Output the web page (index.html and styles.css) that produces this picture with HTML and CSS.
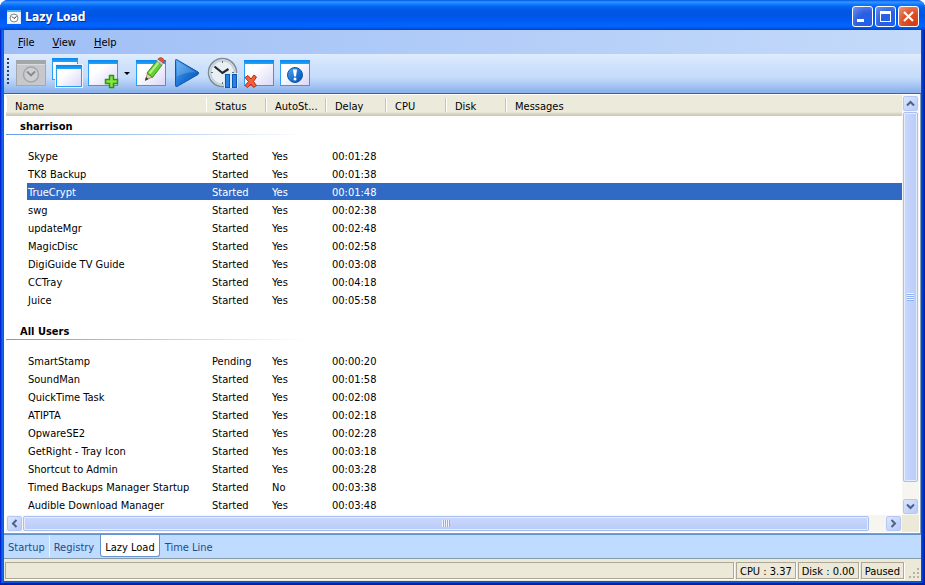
FILE: index.html
```html
<!DOCTYPE html>
<html lang="en">
<head>
    <meta charset="UTF-8">
    <meta name="viewport" content="width=device-width, initial-scale=1.0">
    <title>Lazy Load</title>
    <link rel="stylesheet" href="styles.css">
</head>
<body>
<div class="window">
    <header class="titlebar">
        <svg class="app-icon" width="14" height="14" viewBox="0 0 14 14">
            <rect x="0.5" y="0.5" width="13" height="13" fill="#f4f6f8" stroke="#e4eefa"/>
            <rect x="0" y="0" width="14" height="2" fill="#3fb2f2"/>
            <circle cx="7" cy="8" r="4" fill="#fff" stroke="#7c8791"/>
            <path d="M5 6.500l2 2 2.500-2" fill="none" stroke="#333"/>
        </svg>
        <h1>Lazy Load</h1>
        <div class="caption-buttons">
            <button type="button" aria-label="Minimize"><svg width="19" height="19"><rect x="4" y="12" width="7" height="3" fill="#fff"/></svg></button>
            <button type="button" aria-label="Maximize"><svg width="19" height="19"><path d="M4 4h11v11h-11z M5 7v7h9v-7z" fill="#fff" fill-rule="evenodd"/></svg></button>
            <button type="button" class="close" aria-label="Close"><svg width="19" height="19"><path d="M5 5l9 9M14 5l-9 9" stroke="#fff" stroke-width="2.200"/></svg></button>
        </div>
    </header>

    <nav class="menubar">
        <button type="button"><u>F</u>ile</button>
        <button type="button"><u>V</u>iew</button>
        <button type="button"><u>H</u>elp</button>
    </nav>

    <div class="toolbar">
        <span class="grip"></span>
        <button type="button" aria-label="Lazy load" disabled>
            <svg width="32" height="32" viewBox="0 0 32 32">
                <rect x="1.500" y="3.500" width="29" height="25" fill="#c6c8cb" stroke="#a5a8ab"/>
                <rect x="2" y="4" width="28" height="3" fill="#a4a7aa"/>
                <path d="M2 7.500h28" stroke="#d9dbdd"/>
                <circle cx="16" cy="17.500" r="7.500" fill="#cdcfd1" stroke="#a4a6aa" stroke-width="1.500"/>
                <path d="M12 14.500l4 4 4-4" fill="none" stroke="#85888d" stroke-width="1.800"/>
            </svg>
        </button>
        <button type="button" aria-label="Show windows">
            <svg width="32" height="32" viewBox="0 0 32 32">
                <defs>
                    <linearGradient id="pane" x1="0" y1="0" x2="1" y2="1">
                        <stop offset="0.350" stop-color="#fff"/><stop offset="1" stop-color="#d9d6f6"/>
                    </linearGradient>
                    <linearGradient id="bar" x1="0" y1="0" x2="0" y2="1">
                        <stop offset="0" stop-color="#0a86ee"/><stop offset="1" stop-color="#1fa5fb"/>
                    </linearGradient>
                    <linearGradient id="blue" x1="0" y1="0" x2="1" y2="1">
                        <stop offset="0" stop-color="#5aa9f0"/><stop offset="0.550" stop-color="#1a72d2"/><stop offset="1" stop-color="#0a4faa"/>
                    </linearGradient>
                </defs>
                <rect x="1.500" y="1.500" width="25" height="21" fill="url(#pane)" stroke="#2a9df4"/>
                <rect x="1" y="1" width="26" height="4" fill="url(#bar)"/>
                <rect x="4" y="7" width="28" height="24" fill="#e9f4ff"/>
                <rect x="5.500" y="8.500" width="25" height="21" fill="url(#pane)" stroke="#2a9df4"/>
                <rect x="5" y="8" width="26" height="4" fill="url(#bar)"/>
            </svg>
        </button>
        <button type="button" aria-label="Add">
            <svg width="32" height="32" viewBox="0 0 32 32">
                <rect x="1.500" y="3.500" width="29" height="25" fill="url(#pane)" stroke="#2a9df4"/>
                <rect x="1" y="3" width="30" height="4" fill="url(#bar)"/>
                <path d="M22.500 18.500h4v4h4v4h-4v4h-4v-4h-4v-4h4z" fill="#8be33e" stroke="#209a18" stroke-width="1.500"/>
            </svg>
        </button>
        <button type="button" class="drop" aria-label="More add options">
            <svg width="12" height="32" viewBox="0 0 12 32"><path d="M5 15h6l-3 3z" fill="#000"/></svg>
        </button>
        <button type="button" aria-label="Edit">
            <svg width="32" height="32" viewBox="0 0 32 32">
                <rect x="1.500" y="3.500" width="29" height="25" fill="url(#pane)" stroke="#2a9df4"/>
                <rect x="1" y="3" width="30" height="4" fill="url(#bar)"/>
                <path d="M10.500 23l2-7 5 4z" fill="#f0cf9a" stroke="#826a42" stroke-width="0.700"/>
                <path d="M10 24l1-4 2.500 2z" fill="#333"/>
                <path d="M12 16l9.500-12 5.500 4-9.500 12.500z" fill="#65cf35" stroke="#37921f"/>
                <path d="M14.500 16.500l9-11" stroke="#b3f282" stroke-width="2"/>
                <path d="M21.500 4l1.500-2 5.500 4-1.500 2z" fill="#c8d0d8" stroke="#8c98a5" stroke-width="0.600"/>
                <path d="M23 2q2.500-2.500 5-0.500 2.500 2 0.500 4.500z" fill="#e4573b" stroke="#b93720" stroke-width="0.700"/>
            </svg>
        </button>
        <button type="button" aria-label="Run">
            <svg width="32" height="32" viewBox="0 0 32 32">
                <path d="M5.500 2.500q-1-0.500-1 1v25q0 1.500 1.500 1l21-12q1.500-1.500 0-2.500z" fill="url(#blue)" stroke="#0d58b4"/>
                <path d="M6 4l19 11.500q-9-1-19 4z" fill="#fff" opacity="0.180"/>
            </svg>
        </button>
        <button type="button" aria-label="Pause timer">
            <svg width="32" height="32" viewBox="0 0 32 32">
                <circle cx="15.500" cy="15.500" r="14" fill="#e9f0f4" stroke="#7e8b94" stroke-width="1.500"/>
                <circle cx="15.500" cy="15.500" r="12" fill="none" stroke="#c5d2da" stroke-width="2"/>
                <path d="M15.500 4v2M4 15.500h2M15.500 25v2M25 15.500h2" stroke="#6b767e"/>
                <path d="M7.500 9.500l8 6.500 6-4" fill="none" stroke="#222a30" stroke-width="2.200"/>
                <rect x="17" y="16" width="14" height="15" fill="#d5e7fa"/>
                <rect x="18.500" y="17.500" width="4" height="13" fill="#2a82dc" stroke="#0b58b5"/>
                <rect x="25.500" y="17.500" width="4" height="13" fill="#2a82dc" stroke="#0b58b5"/>
            </svg>
        </button>
        <button type="button" aria-label="Remove">
            <svg width="32" height="32" viewBox="0 0 32 32">
                <rect x="1.500" y="3.500" width="29" height="25" fill="url(#pane)" stroke="#2a9df4"/>
                <rect x="1" y="3" width="30" height="4" fill="url(#bar)"/>
                <path d="M2 20.500l3-2 3 3.500 3-4 2.500 2-3 4.500 3 4-3 2-2.500-3.500-3.500 3.500-2.500-2 3.500-4z" fill="#f0603c" stroke="#bb2a12"/>
            </svg>
        </button>
        <button type="button" aria-label="About">
            <svg width="32" height="32" viewBox="0 0 32 32">
                <rect x="1.500" y="3.500" width="29" height="25" fill="url(#pane)" stroke="#2a9df4"/>
                <rect x="1" y="3" width="30" height="4" fill="url(#bar)"/>
                <circle cx="16" cy="18" r="7.500" fill="url(#blue)" stroke="#0c57b0"/>
                <path d="M14 12.500h4l-1 7h-2z" fill="#fff"/>
                <circle cx="16" cy="22" r="1.500" fill="#fff"/>
            </svg>
        </button>
    </div>

    <main class="list-view">
        <div class="list-pane">
            <table>
                <colgroup>
                    <col class="col-name"><col class="col"><col class="col"><col class="col"><col class="col"><col class="col"><col>
                </colgroup>
                <thead>
                    <tr><th>Name</th><th>Status</th><th>AutoSt...</th><th>Delay</th><th>CPU</th><th>Disk</th><th>Messages</th></tr>
                </thead>
                <tbody>
                    <tr class="group"><th colspan="7"><span>sharrison</span></th></tr>
                    <tr><td>Skype</td><td>Started</td><td>Yes</td><td>00:01:28</td><td></td><td></td><td></td></tr>
                    <tr><td>TK8 Backup</td><td>Started</td><td>Yes</td><td>00:01:38</td><td></td><td></td><td></td></tr>
                    <tr class="selected"><td>TrueCrypt</td><td>Started</td><td>Yes</td><td>00:01:48</td><td></td><td></td><td></td></tr>
                    <tr><td>swg</td><td>Started</td><td>Yes</td><td>00:02:38</td><td></td><td></td><td></td></tr>
                    <tr><td>updateMgr</td><td>Started</td><td>Yes</td><td>00:02:48</td><td></td><td></td><td></td></tr>
                    <tr><td>MagicDisc</td><td>Started</td><td>Yes</td><td>00:02:58</td><td></td><td></td><td></td></tr>
                    <tr><td>DigiGuide TV Guide</td><td>Started</td><td>Yes</td><td>00:03:08</td><td></td><td></td><td></td></tr>
                    <tr><td>CCTray</td><td>Started</td><td>Yes</td><td>00:04:18</td><td></td><td></td><td></td></tr>
                    <tr><td>Juice</td><td>Started</td><td>Yes</td><td>00:05:58</td><td></td><td></td><td></td></tr>
                </tbody>
                <tbody class="next">
                    <tr class="group"><th colspan="7"><span>All Users</span></th></tr>
                    <tr><td>SmartStamp</td><td>Pending</td><td>Yes</td><td>00:00:20</td><td></td><td></td><td></td></tr>
                    <tr><td>SoundMan</td><td>Started</td><td>Yes</td><td>00:01:58</td><td></td><td></td><td></td></tr>
                    <tr><td>QuickTime Task</td><td>Started</td><td>Yes</td><td>00:02:08</td><td></td><td></td><td></td></tr>
                    <tr><td>ATIPTA</td><td>Started</td><td>Yes</td><td>00:02:18</td><td></td><td></td><td></td></tr>
                    <tr><td>OpwareSE2</td><td>Started</td><td>Yes</td><td>00:02:28</td><td></td><td></td><td></td></tr>
                    <tr><td>GetRight - Tray Icon</td><td>Started</td><td>Yes</td><td>00:03:18</td><td></td><td></td><td></td></tr>
                    <tr><td>Shortcut to Admin</td><td>Started</td><td>Yes</td><td>00:03:28</td><td></td><td></td><td></td></tr>
                    <tr><td>Timed Backups Manager Startup</td><td>Started</td><td>No</td><td>00:03:38</td><td></td><td></td><td></td></tr>
                    <tr><td>Audible Download Manager</td><td>Started</td><td>Yes</td><td>00:03:48</td><td></td><td></td><td></td></tr>
                </tbody>
            </table>
        </div>
        <div class="scroll vertical">
            <button type="button" aria-label="Scroll up"><svg width="9" height="9"><path d="M1 6.500l3.500-3.500 3.500 3.500" fill="none" stroke="#4d6185" stroke-width="2"/></svg></button>
            <span class="thumb"><i></i></span>
            <button type="button" aria-label="Scroll down"><svg width="9" height="9"><path d="M1 2.500l3.500 3.500 3.500-3.500" fill="none" stroke="#4d6185" stroke-width="2"/></svg></button>
        </div>
        <div class="scroll horizontal">
            <button type="button" aria-label="Scroll left"><svg width="9" height="9"><path d="M6.500 1l-3.500 3.500 3.500 3.500" fill="none" stroke="#4d6185" stroke-width="2"/></svg></button>
            <span class="thumb"><i></i></span>
            <button type="button" aria-label="Scroll right"><svg width="9" height="9"><path d="M2.500 1l3.500 3.500-3.500 3.500" fill="none" stroke="#4d6185" stroke-width="2"/></svg></button>
        </div>
        <div class="corner"></div>
    </main>

    <nav class="tabs">
        <a href="#startup">Startup</a>
        <a href="#registry">Registry</a>
        <a href="#lazyload" class="active">Lazy Load</a>
        <a href="#timeline">Time Line</a>
    </nav>

    <footer class="statusbar">
        <span class="message"></span>
        <span>CPU : 3.37</span>
        <span>Disk : 0.00</span>
        <span>Paused</span>
        <svg class="size-grip" width="12" height="12" viewBox="0 0 12 12">
            <path d="M9 1h2v2h-2zM5 5h2v2h-2zM9 5h2v2h-2zM1 9h2v2h-2zM5 9h2v2h-2zM9 9h2v2h-2z" fill="#b8b4a3"/>
        </svg>
    </footer>
</div>
</body>
</html>
```
FILE: styles.css
```css
* {
    box-sizing: border-box;
}
body {
    margin: 0;
    background: #fff;
    color: #000;
    font-family: "DejaVu Sans Condensed", "DejaVu Sans", Tahoma, sans-serif;
    font-size: 11px;
    line-height: 14px;
}
button {
    margin: 0;
    padding: 0;
    border: none;
    background: none;
    color: inherit;
    font: inherit;
}
svg {
    display: block;
}
.window {
    display: flex;
    flex-direction: column;
    height: 100vh;
    padding: 0 4px 4px;
    border-radius: 8px 8px 0 0;
    overflow: hidden;
    background: linear-gradient(to right, #0019cf 0, #0831d9 1px, #166aee 2px, #0855dd 4px, #0855dd calc(100% - 4px), #0441d8 calc(100% - 3px), #001ea0 100%);
    box-shadow: inset 0 -2px #001ea0;
}

/* title bar */
.titlebar {
    display: flex;
    align-items: center;
    height: 30px;
    margin: 0 -4px;
    padding: 3px 6px 0 7px;
    flex: none;
    background: linear-gradient(#0058ee 0, #3593ff 2px, #288eff 3px, #127dff 4px, #0262ee 7px, #0057e5 11px, #0055e5 15px, #005bf5 21px, #0066ff 26px, #0055e8 28px, #0043cf 30px);
}
.titlebar h1 {
    flex: 1;
    margin: 0 0 0 4px;
    color: #fff;
    font-size: 12px;
    text-shadow: 1px 1px #0b2a8c;
}
.caption-buttons {
    display: flex;
    gap: 2px;
}
.caption-buttons button {
    width: 21px;
    height: 21px;
    border: 1px solid #fff;
    border-radius: 3px;
    background: radial-gradient(circle at 80% 90%, #1f62ee, #2a5fe0 50%, #6f93ee 100%);
}
.caption-buttons .close {
    background: radial-gradient(circle at 80% 90%, #d53b12, #dd5027 50%, #ee987c 100%);
}

/* menu and toolbar */
.menubar {
    display: flex;
    gap: 18px;
    height: 24px;
    padding: 2px 14px 0;
    flex: none;
    background: linear-gradient(to right, #9ebef5, #c4dafa);
}
.toolbar {
    display: flex;
    align-items: flex-start;
    gap: 4px;
    height: 40px;
    padding: 3px;
    flex: none;
    border-bottom: 1px solid #3b619c;
    box-shadow: inset 0 -1px #8fb3ea;
    background: linear-gradient(#dfecfd 0, #cfe1fb 30%, #c5dcfa 60%, #9fc1f1 85%, #84ade9 100%);
}
.grip {
    width: 2px;
    height: 26px;
    margin: 1px 2px 0 0;
    background: repeating-linear-gradient(#274176 0, #274176 2px, transparent 2px, transparent 4px);
}
.toolbar .drop {
    margin: 0 0 0 -4px;
}

/* program list */
.list-view {
    display: grid;
    grid-template-columns: minmax(0, 1fr) 17px;
    grid-template-rows: minmax(0, 1fr) 17px;
    flex: 1;
    min-height: 0;
    padding: 1px 1px 1px 2px;
    border: solid #7f9db9;
    border-width: 0 1px 1px 0;
    background: #fff;
}
.list-pane {
    overflow: hidden;
}
table {
    width: 100%;
    table-layout: fixed;
    border-spacing: 0;
}
.col-name {
    width: 200px;
}
.col {
    width: 60px;
}
th, td {
    padding: 0;
    font-weight: normal;
    text-align: left;
    white-space: nowrap;
}
thead tr {
    background: linear-gradient(#ebeadb 0, #ebeadb 17px, #d6d2c2 19px, #cbc7b8 21px);
}
thead th {
    height: 21px;
    padding: 2px 0 0 9px;
    background: linear-gradient(to right, #fff 1px, transparent 1px) 0 3px / 100% 14px no-repeat,
        linear-gradient(to left, #c7c5b2 1px, transparent 1px) 0 3px / 100% 14px no-repeat;
}
thead th:first-child, thead th:last-child {
    background-position: 0 3px, 1px 3px;
}
.group th {
    height: 31px;
    vertical-align: top;
    font-weight: bold;
}
.group span {
    display: block;
    width: 300px;
    height: 19px;
    padding: 4px 0 0 14px;
    background: linear-gradient(to right, #6a9de0, #fff) bottom / 100% 1px no-repeat;
}
.next .group th {
    height: 43px;
    padding-top: 12px;
}
td {
    height: 18px;
    padding: 2px 0 0 6px;
    border-bottom: 1px solid #fff;
}
td:first-child {
    padding-left: 1px;
    border-left: 21px solid #fff;
}
.selected td {
    background: #316ac5;
    color: #fff;
}

/* scroll bars */
.scroll {
    display: flex;
    padding: 1px;
    gap: 1px;
    background: #f6f5f0;
}
.vertical {
    flex-direction: column;
}
.scroll button {
    display: flex;
    align-items: center;
    justify-content: center;
    width: 15px;
    height: 15px;
    flex: none;
    border: 1px solid #b5c8f5;
    border-radius: 2px;
    background: linear-gradient(135deg, #dbe5fe, #b9cbf9);
}
.thumb {
    display: flex;
    align-items: center;
    justify-content: center;
    flex: 1;
    border: 1px solid #a9bff0;
    border-radius: 2px;
    box-shadow: inset 0 0 0 1px #e4ecff;
    background: linear-gradient(to right, #cad8fe, #b9cbf8);
}
.vertical .thumb {
    margin-bottom: 16px;
}
.horizontal .thumb {
    margin-right: 16px;
    background: linear-gradient(#cad8fe, #b9cbf8);
}
.vertical i {
    width: 7px;
    height: 8px;
    background: repeating-linear-gradient(#eef4fe 0, #eef4fe 1px, #8cb0f8 1px, #8cb0f8 2px);
}
.horizontal i {
    width: 8px;
    height: 7px;
    background: repeating-linear-gradient(to right, #eef4fe 0, #eef4fe 1px, #8cb0f8 1px, #8cb0f8 2px);
}
.corner {
    background: #ece9d8;
}

/* bottom tabs */
.tabs {
    display: flex;
    align-items: flex-start;
    height: 25px;
    flex: none;
    border-top: 1px solid #6593cf;
    border-bottom: 1px solid #8a9ba8;
    background: #bfdbff;
}
.tabs a {
    height: 22px;
    padding: 6px 4px 0;
    color: #204d89;
    text-decoration: none;
}
.tabs a:first-child {
    border-right: 1px solid #e9f3ff;
}
.tabs .active {
    margin: 0 1px 0 2px;
    border: 1px solid #6593cf;
    border-top: none;
    border-radius: 0 0 3px 3px;
    background: #fff;
    color: #000;
}

/* status bar */
.statusbar {
    display: flex;
    align-items: center;
    gap: 2px;
    height: 22px;
    padding: 2px 1px;
    flex: none;
    background: #ece9d8;
}
.statusbar span {
    height: 17px;
    padding: 2px 3px 0;
    border: 1px solid #aca899;
    box-shadow: 1px 1px #fff;
    white-space: nowrap;
}
.statusbar .message {
    flex: 1;
}
.size-grip {
    align-self: flex-end;
    margin-left: 2px;
}
```
